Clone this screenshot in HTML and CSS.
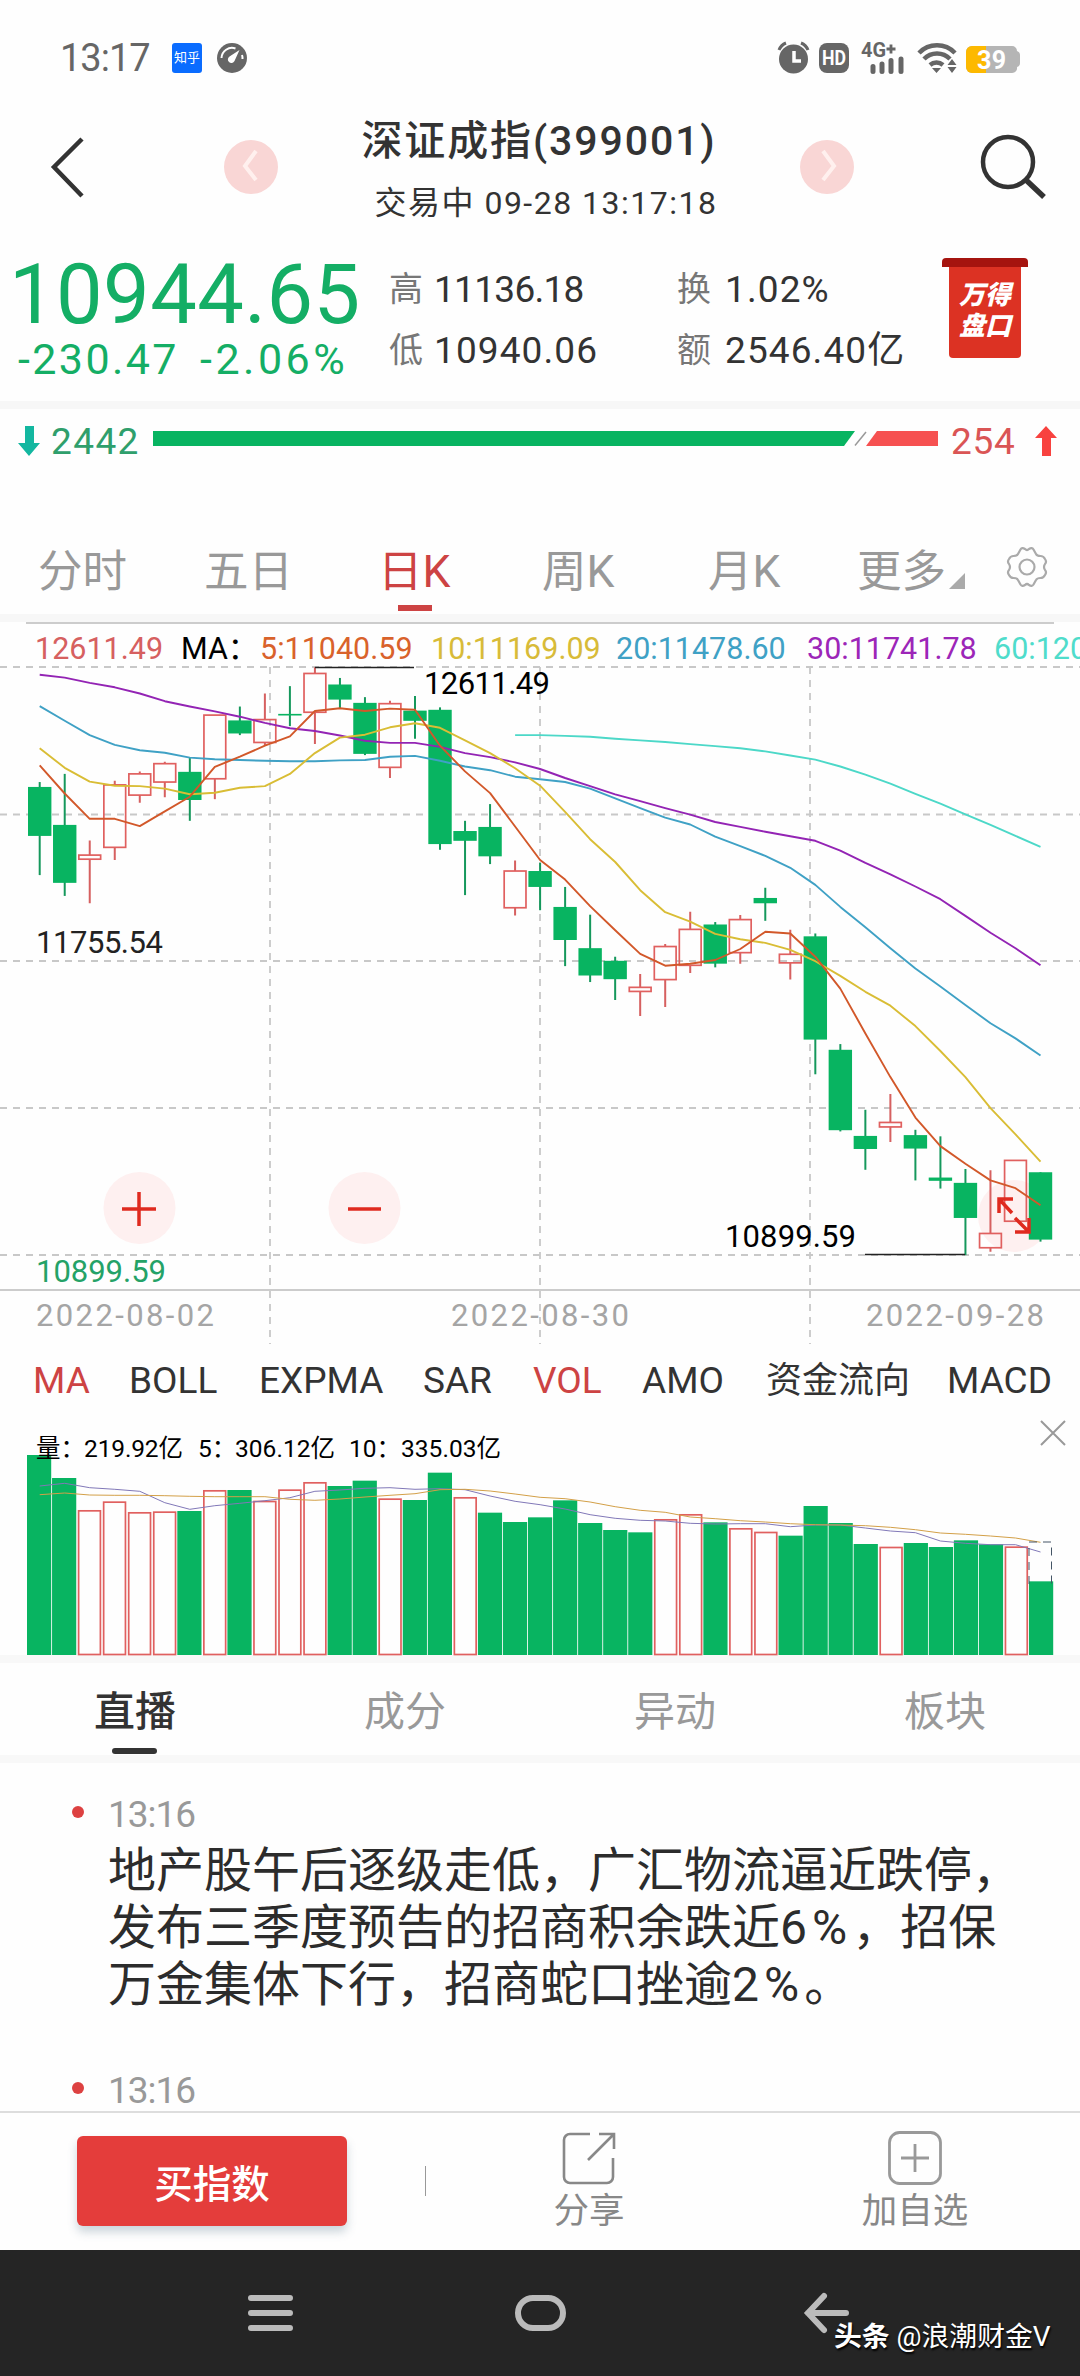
FILE: index.html
```html
<!DOCTYPE html>
<html lang="zh-CN">
<head>
    <meta charset="UTF-8">
    <meta name="viewport" content="width=device-width, initial-scale=1.0">
    <title>深证成指(399001)</title>
    <link rel="stylesheet" href="styles.css">
</head>
<body>
    <!-- Status bar -->
    <div class="status">
        <span class="clock">13:17</span>
        <span class="zhihu">知乎</span>
        <svg class="gauge" width="30" height="30" viewBox="0 0 30 30">
            <circle cx="15" cy="15" r="15" fill="#666"/>
            <path d="M4.500 15a10.500 10.500 0 0 1 14-9.500M25 12a10 10 0 0 1 0.500 4" fill="none" stroke="#fff" stroke-width="2"/>
            <path d="M22.500 7 L17.500 18 a3.500 3.500 0 1 1 -5 -4.500Z" fill="#fff"/>
        </svg>
        <svg class="status-icons" width="250" height="34" viewBox="774 41 250 34">
            <circle cx="793.500" cy="59" r="14.500" fill="#666"/>
            <path d="M779 50 q2-5 7-7M808 50 q-2-5-7-7" fill="none" stroke="#666" stroke-width="3"/>
            <path d="M794 51v10h7" fill="none" stroke="#fff" stroke-width="3.500"/>
            <rect x="819" y="43" width="30" height="30" rx="8" fill="#666"/>
            <text x="822" y="65" class="hd" textLength="24" lengthAdjust="spacingAndGlyphs">HD</text>
            <text x="861" y="57" class="net" textLength="25" lengthAdjust="spacingAndGlyphs">4G</text>
            <path d="M886.500 49h9M891 44.500v9" stroke="#666" stroke-width="2.800"/>
            <path d="M873 66.500v5M882 64v7.500M891 60.500v11M901 59v12.500" stroke="#666" stroke-width="5" stroke-linecap="round"/>
            <g fill="none" stroke="#666" stroke-width="4.500">
                <path d="M919 53a25 25 0 0 1 36 0"/>
                <path d="M924 59a18 18 0 0 1 26 0"/>
                <path d="M930 65a10 10 0 0 1 13 0"/>
            </g>
            <path d="M932 68h9l-4.500 5z M952 59l4.500 6h-9z M952 73l4.500-6h-9z" fill="#666"/>
            <path d="M972 46h40a5 5 0 0 1 5 5q3 1 3 4v8q0 3-3 4a5 5 0 0 1-5 6h-40a6 6 0 0 1-6-6v-15a6 6 0 0 1 6-6z" fill="#b5b5b5"/>
            <path d="M972 46h14v27h-14a6 6 0 0 1-6-6v-15a6 6 0 0 1 6-6z" fill="#fdb900"/>
            <text x="977" y="69" class="charge" textLength="29">39</text>
        </svg>
    </div>

    <!-- Title -->
    <header class="header">
        <svg width="40" height="64" viewBox="0 0 40 64" fill="none" stroke="#333" stroke-width="4.500"><path d="M33 4 L5 32 L33 61"/></svg>
        <svg class="circle-btn" width="54" height="54" viewBox="0 0 54 54"><circle cx="27" cy="27" r="27"/><path d="M32 11 L21 26 L32 40"/></svg>
        <div class="title">
            <h1>深证成指(399001)</h1>
            <p>交易中 09-28 13:17:18</p>
        </div>
        <svg class="circle-btn" width="54" height="54" viewBox="0 0 54 54"><circle cx="27" cy="27" r="27"/><path d="M23 11 L34 26 L23 40"/></svg>
        <svg class="search" width="66" height="66" viewBox="0 0 66 66" fill="none" stroke="#333" stroke-width="4.500"><circle cx="28" cy="28" r="25"/><path d="M46 46 L64 63" stroke-width="5.500"/></svg>
    </header>

    <!-- Quote -->
    <section class="quote">
        <div class="price">
            <div class="last">10944.65</div>
            <div class="change"><span>-230.47</span><span>-2.06%</span></div>
        </div>
        <div class="stats">
            <span class="label">高</span><span>11136.18</span>
            <span class="label">换</span><span class="wide">1.02%</span>
            <span class="label">低</span><span class="wide">10940.06</span>
            <span class="label">额</span><span class="wide">2546.40亿</span>
        </div>
        <div class="badge"><span>万得<br>盘口</span></div>
    </section>

    <!-- Falling / rising counts -->
    <section class="breadth">
        <svg width="22" height="30" viewBox="0 0 22 30"><path d="M7 0h9v17h6L11 30 0 17h7z" fill="#13b7a0"/></svg>
        <span class="down">2442</span>
        <svg width="785" height="15" viewBox="0 0 785 15">
            <path d="M0 0h702l-11 15H0z" fill="#08b461"/>
            <path d="M713 1 L702 14.500" stroke="#999" stroke-width="1.500"/>
            <path d="M724 0h61v15h-72z" fill="#f65151"/>
        </svg>
        <span class="up">254</span>
        <svg width="22" height="30" viewBox="0 0 22 30"><path d="M7 30h9V12h6L11 0 0 12h7z" fill="#f8423f"/></svg>
    </section>

    <!-- Period tabs -->
    <nav class="periods">
        <span>分时</span><span>五日</span><span class="active">日K</span><span>周K</span><span>月K</span><span class="more">更多</span>
        <svg class="gear" width="44" height="44" viewBox="0 0 44 44" fill="none" stroke="#aaa" stroke-width="2.200">
            <path d="M15.500 4.500 Q17 2 20 4 Q22 6 24 4 Q27 2 28.500 4.500 L31 9 Q32 11 35.500 11 Q38.500 11 40 14 Q42 17 40 19 Q38 22 40 25 Q42 27 40 30 Q38.500 33 35.500 33 Q32 33 31 35 L28.500 39.500 Q27 42 24 40 Q22 38 20 40 Q17 42 15.500 39.500 L13 35 Q12 33 8.500 33 Q5.500 33 4 30 Q2 27 4 25 Q6 22 4 19 Q2 17 4 14 Q5.500 11 8.500 11 Q12 11 13 9 Z"/>
            <circle cx="22" cy="22" r="7.500"/>
        </svg>
    </nav>

    <!-- K line chart -->
    <section class="kline">
        <div class="legend">
            <span class="c-high">12611.49</span>
            <span class="c-black">MA：</span>
            <span class="c-ma5">5:11040.59</span>
            <span class="c-ma10">10:11169.09</span>
            <span class="c-ma20">20:11478.60</span>
            <span class="c-ma30">30:11741.78</span>
            <span class="c-ma60">60:12042.67</span>
        </div>
        <svg class="chart" id="kline" width="1080" height="690" viewBox="0 0 1080 690">
            <g class="grid">
                <path d="M0 7H1080M0 154.500H1080M0 301H1080M0 448H1080M0 595H1080"/>
                <path d="M270 7V684M540 7V684M810 7V684"/>
            </g>
            <path class="axis" d="M0 630H1080"/>
            <circle class="zoom-bg" cx="139.500" cy="548" r="36"/>
            <circle class="zoom-bg" cx="364.500" cy="548" r="36"/>
            <circle class="zoom-bg" cx="1014" cy="556" r="36"/>
            <path class="zoom" d="M122 549h34M139 532v34M348 549h33"/>
            <g id="candles"></g>
            <g id="averages"></g>
            <path class="zoom" d="M999 553v-14h14M999 539l13 14M1029 558v14h-14M1015 558l14 14"/>
            <path class="mark" d="M315 7.500H414M865 594.500H965"/>
            <text class="t-black" x="424" y="33.500" textLength="126">12611.49</text>
            <text class="t-dark" x="36" y="293" textLength="127">11755.54</text>
            <text class="t-black" x="725" y="587" textLength="131">10899.59</text>
            <text class="t-green" x="36" y="622" textLength="130">10899.59</text>
            <text class="t-date" x="36" y="666" textLength="178">2022-08-02</text>
            <text class="t-date" x="451" y="666" textLength="178">2022-08-30</text>
            <text class="t-date" x="866" y="666" textLength="178">2022-09-28</text>
        </svg>
    </section>

    <!-- Indicators -->
    <nav class="indicators">
        <span class="active">MA</span><span>BOLL</span><span>EXPMA</span><span>SAR</span><span class="active">VOL</span><span>AMO</span><span class="cjk">资金流向</span><span>MACD</span>
    </nav>

    <!-- Volume chart -->
    <svg class="chart" id="volume" width="1080" height="241" viewBox="0 0 1080 241">
        <g id="bars"></g>
        <g id="volAverages"></g>
        <path d="M1029 164v-42h22.500v42" fill="none" stroke="#456" stroke-width="1" stroke-dasharray="8 6"/>
        <g class="t-vol">
            <text x="36" y="37">量：</text>
            <text x="84" y="37" textLength="99">219.92亿</text>
            <text x="198" y="37">5：</text>
            <text x="235" y="37" textLength="100">306.12亿</text>
            <text x="349" y="37">10：</text>
            <text x="401" y="37" textLength="100">335.03亿</text>
        </g>
        <path d="M1041 1l24 24M1065 1l-24 24" stroke="#999" stroke-width="2"/>
    </svg>

    <!-- News tabs -->
    <nav class="news-tabs">
        <span class="active">直播</span><span>成分</span><span>异动</span><span>板块</span>
    </nav>

    <main class="feed">
        <article>
            <time>13:16</time>
            <p>地产股午后逐级走低，广汇物流逼近跌停，<br>发布三季度预告的招商积余跌近<i>6%</i>，招保<br>万金集体下行，招商蛇口挫逾<i>2%</i>。</p>
        </article>
        <article>
            <time>13:16</time>
        </article>
    </main>

    <!-- Bottom actions -->
    <footer class="actions">
        <button>买指数</button>
        <span class="divider"></span>
        <div class="action">
            <svg width="56" height="56" viewBox="0 0 56 56" fill="none" stroke="#888" stroke-width="2.600">
                <path d="M29 4H9a6 6 0 0 0-6 6v37a6 6 0 0 0 6 6h37a6 6 0 0 0 6-6V28"/>
                <path d="M38 4h15v15M52 5L27 30"/>
            </svg>
            <span>分享</span>
        </div>
        <div class="action">
            <svg width="56" height="56" viewBox="0 0 56 56" fill="none" stroke="#999" stroke-width="2.800">
                <rect x="2.500" y="2.500" width="51" height="51" rx="10"/>
                <path d="M28 14v28M14 28h28"/>
            </svg>
            <span>加自选</span>
        </div>
    </footer>

    <!-- System navigation -->
    <div class="sysnav">
        <svg width="1080" height="126" viewBox="0 0 1080 126" fill="none" stroke="#bbb" stroke-width="6" stroke-linecap="round">
            <path d="M251 48h39M251 63h39M251 78h39"/>
            <rect x="518" y="48" width="45" height="30" rx="15"/>
            <path d="M846 63H808M824 46L808 63l16 17"/>
        </svg>
        <div class="watermark"><b>头条</b><span>@浪潮财金V</span></div>
    </div>

    <script src="chart.js"></script>
</body>
</html>
```
FILE: styles.css
```css
* {
    box-sizing: border-box;
}
body {
    margin: 0;
    width: 1080px;
    height: 2376px;
    overflow: hidden;
    background: #fefefe;
    color: #333;
    font-family: Roboto, "Noto Sans CJK SC", sans-serif;
}
svg {
    display: block;
    flex: none;
}
h1, p {
    margin: 0;
    font-weight: normal;
}

/* Status bar */
.status {
    display: flex;
    align-items: center;
    height: 116px;
    padding-left: 60px;
    color: #666;
}
.clock {
    width: 112px;
    font-size: 38px;
    letter-spacing: -1px;
}
.zhihu {
    width: 30px;
    height: 30px;
    margin-right: 15px;
    border-radius: 3px;
    background: #0a6cff;
    color: #fff;
    font-size: 13px;
    line-height: 29px;
    text-align: center;
}
.status-icons {
    margin-left: 527px;
}
.hd {
    font-size: 20px;
    font-weight: bold;
    fill: #fff;
}
.net {
    font-size: 20px;
    font-weight: bold;
    fill: #666;
}
.charge {
    font-size: 25px;
    font-weight: bold;
    fill: #fff;
}

/* Title */
.header {
    display: flex;
    align-items: center;
    height: 118px;
    padding-left: 49px;
}
.header > svg {
    margin-top: -17px;
}
.circle-btn {
    fill: none;
    stroke: #fff0ee;
    stroke-width: 4;
}
.circle-btn circle {
    fill: #f9d6d5;
    stroke: none;
}
.header .circle-btn:nth-child(2) {
    margin-left: 135px;
}
.title {
    width: 522px;
    padding-bottom: 6px;
    text-align: center;
    white-space: nowrap;
}
.title h1 {
    font-size: 41px;
    font-weight: 500;
    line-height: 62px;
    letter-spacing: 1.900px;
}
.title p {
    font-size: 32px;
    line-height: 62px;
    letter-spacing: 1.500px;
    margin-left: 14px;
}
.header .search {
    margin-left: 126px;
}

/* Quote */
.quote {
    display: flex;
    height: 175px;
    padding-top: 24px;
    border-bottom: 8px solid #f7f7f7;
}
.price {
    width: 389px;
    padding-left: 9px;
    color: #14ae65;
}
.last {
    margin-top: -3px;
    height: 79px;
    font-size: 83px;
    line-height: 80px;
    letter-spacing: 0.4px;
}
.change {
    display: flex;
    padding-left: 9px;
    font-size: 43px;
    line-height: 50px;
    letter-spacing: 2.400px;
}
.change span:first-child {
    width: 182px;
}
.change span:last-child {
    letter-spacing: 3.500px;
}
.stats {
    display: grid;
    grid-template-columns: 45px 243px 48px 217px;
    grid-auto-rows: 61px;
    padding-top: 1px;
    font-size: 37px;
    line-height: 61px;
    letter-spacing: -0.7px;
}
.stats .wide {
    letter-spacing: 1.100px;
}
.label {
    color: #777;
    font-size: 34px;
}
.badge {
    width: 86px;
    height: 100px;
    padding: 9px 7px 0;
    background: linear-gradient(#a5140f, #a5140f) 0 0 / 86px 9px no-repeat;
    border-radius: 4px;
    color: #fff;
    font-size: 26px;
    font-weight: 900;
    font-style: italic;
    line-height: 31px;
    text-align: center;
}
.badge span {
    display: block;
    height: 91px;
    padding-top: 13px;
    border-radius: 0 0 4px 4px;
    background: #dc3223;
}

/* Falling / rising counts */
.breadth {
    display: flex;
    align-items: center;
    height: 64px;
    padding-left: 18px;
    font-size: 37px;
}
.breadth .down {
    width: 113px;
    padding-left: 11px;
    color: #2f9f6c;
    letter-spacing: 1.400px;
}
.breadth svg:nth-child(3) {
    margin-top: -6px;
}
.breadth .up {
    width: 97px;
    padding-left: 13px;
    color: #da5555;
    letter-spacing: 0.7px;
}

/* Period tabs */
.periods {
    display: grid;
    grid-template-columns: 166px 174px 164px 166px 149px 148px 44px;
    align-items: center;
    height: 149px;
    padding: 47px 0 0 38px;
    border-bottom: 8px solid #f7f7f7;
    color: #999;
    font-size: 44.500px;
}
.periods span {
    position: relative;
}
.periods .active {
    color: #cd4343;
}
.periods .active::after {
    content: "";
    position: absolute;
    left: 20px;
    bottom: -11px;
    width: 34px;
    height: 6px;
    background: #cd4343;
}
.more::after {
    content: "";
    position: absolute;
    left: 92px;
    bottom: 11px;
    border-left: 16px solid transparent;
    border-bottom: 16px solid #aaa;
}

/* K line chart */
.kline {
    height: 728px;
}
.legend {
    display: grid;
    grid-template-columns: 146px 79px 171px 185px 191px 187px 85px;
    height: 38px;
    padding: 8px 0 0 35px;
    background: linear-gradient(#ccc, #ccc) 26px 0 / 1028px 2px no-repeat;
    font-size: 30.500px;
    line-height: 38px;
    white-space: nowrap;
}
.c-high { color: #d66060; }
.c-black { color: #000; }
.c-ma5 { color: #d9622b; }
.c-ma10 { color: #d8bb38; }
.c-ma20 { color: #3fa1c5; }
.c-ma30 { color: #9c26b8; }
.c-ma60 { color: #4fdccb; }
.grid {
    fill: none;
    stroke: #c8c8c8;
    stroke-width: 1.800;
    stroke-dasharray: 7 6;
}
.axis {
    stroke: #ccc;
    stroke-width: 2;
}
.fall {
    fill: #08b461;
    stroke: none;
}
.rise {
    fill: #fefefe;
    stroke: #e0605f;
    stroke-width: 1.700;
}
.candle-rise {
    fill: none;
    stroke: #e0605f;
    stroke-width: 1.700;
}
.wick-fall {
    stroke: #15985c;
    stroke-width: 2;
}
.wick-rise {
    stroke: #d66060;
    stroke-width: 2;
}
.line {
    fill: none;
    stroke-width: 1.900;
    stroke-linejoin: round;
}
.ma5 { stroke: #d2582a; }
.ma10 { stroke: #d9bd35; }
.ma20 { stroke: #3fa1c5; }
.ma30 { stroke: #9324b4; }
.ma60 { stroke: #4cd8c8; }
.vol5 { stroke: #8178b8; stroke-width: 1; }
.vol10 { stroke: #d3a048; stroke-width: 1; }
.zoom-bg {
    fill: #fef0f0;
}
.zoom {
    fill: none;
    stroke: #df2a1f;
    stroke-width: 3.500;
}
.mark {
    stroke: #222;
    stroke-width: 1.500;
}
.chart text {
    font-size: 31px;
}
.t-black { fill: #000; }
.t-dark { fill: #222; }
.t-green { fill: #24a267; }
.t-date { fill: #a5a5a5; }
.chart .t-vol text {
    fill: #000;
    font-size: 24.500px;
}

/* Indicators */
.indicators {
    display: grid;
    grid-template-columns: 96px 130px 164px 110px 109px 124px 181px 120px;
    height: 70px;
    padding-left: 33px;
    font-size: 37px;
    line-height: 62px;
}
.indicators .active {
    color: #cd4343;
}
.indicators .cjk {
    font-size: 36px;
}

/* News tabs */
.news-tabs {
    display: grid;
    grid-template-columns: repeat(4, 270px);
    height: 108px;
    margin-top: -6px;
    border-top: 8px solid #f8f8f8;
    border-bottom: 8px solid #f8f8f8;
    color: #999;
    font-size: 41px;
    line-height: 98px;
    text-align: center;
}
.news-tabs .active {
    position: relative;
    color: #333;
    font-weight: 500;
}
.news-tabs .active::after {
    content: "";
    position: absolute;
    left: 112px;
    top: 85px;
    width: 45px;
    height: 6px;
    border-radius: 3px;
    background: #333;
}

/* Feed */
.feed {
    height: 348px;
    padding: 25px 0 0 108px;
    overflow: hidden;
}
.feed article {
    height: 276px;
}
.feed time {
    position: relative;
    display: block;
    color: #999;
    font-size: 37px;
    line-height: 53px;
    letter-spacing: -1px;
}
.feed time::before {
    content: "";
    position: absolute;
    left: -36px;
    top: 18px;
    width: 12px;
    height: 12px;
    border-radius: 50%;
    background: #dd4141;
}
.feed p {
    color: #2c2c2c;
    font-size: 48px;
    line-height: 57px;
    white-space: nowrap;
    margin-top: 1px;
}
.feed i {
    font-style: normal;
    letter-spacing: 5px;
}

/* Bottom actions */
.actions {
    display: flex;
    height: 139px;
    padding-left: 77px;
    border-top: 2px solid #ddd;
}
.actions button {
    width: 270px;
    height: 90px;
    margin-top: 23px;
    padding: 0;
    border: none;
    border-radius: 6px;
    background: #e43d3b;
    box-shadow: 0 6px 10px rgba(90, 120, 140, 0.3);
    color: #fff;
    font: 500 38.500px Roboto, "Noto Sans CJK SC", sans-serif;
}
.divider {
    width: 1px;
    height: 30px;
    margin: 53px 0 0 78px;
    background: #999;
}
.action {
    display: flex;
    flex-direction: column;
    align-items: center;
    width: 326px;
    padding-top: 17px;
    color: #888;
    font-size: 35.500px;
    line-height: 50px;
}

/* System navigation */
.sysnav {
    position: relative;
    height: 126px;
    background: #252525;
}
.watermark {
    position: absolute;
    left: 834px;
    top: 66px;
    display: flex;
    gap: 7px;
    color: #fff;
    font-size: 27.800px;
    line-height: 42px;
    text-shadow: 1px 2px 2px #000;
    white-space: nowrap;
}
```
FILE: chart.js
```js
const COUNT = 41;
const STEP = 25.02;
const SVG = 'http://www.w3.org/2000/svg';

// [top, bottom, high, low], measured down from the top of the plot
const candles = [
    [311, 431, 299, 527], [404, 546, 279, 578], [478, 488, 442, 596], [306, 459, 296, 490],
    [279, 331, 273, 350], [254, 299, 249, 336], [274, 343, 239, 394], [135, 291, 135, 341],
    [148, 180, 114, 184], [146, 202, 82, 209], [132, 136, 64, 162], [33, 128, 18, 206],
    [60, 97, 44, 118], [105, 230, 91, 233], [107, 263, 100, 289], [124, 149, 88, 193],
    [122, 451, 116, 465], [419, 443, 394, 576], [409, 481, 353, 500], [517, 607, 491, 626],
    [517, 556, 497, 613], [605, 686, 556, 750], [706, 773, 624, 789], [737, 782, 727, 833],
    [802, 812, 769, 872], [702, 783, 696, 850], [660, 748, 617, 767], [648, 744, 642, 753],
    [636, 717, 625, 744], [583, 596, 558, 639], [721, 742, 661, 783], [677, 930, 670, 1015],
    [955, 1152, 941, 1155], [1166, 1198, 1102, 1249], [1133, 1144, 1063, 1181], [1164, 1197, 1151, 1275],
    [1268, 1276, 1167, 1295], [1281, 1367, 1247, 1458], [1405, 1440, 1250, 1450], [1226, 1375, 1226, 1375],
    [1255, 1420, 1255, 1425]
];
const candleDir = 'GGRRRRGRGRGRGGRGGGGRGGGGRRRGRGRGGGRGGGRRG';

const averages = {
    ma60: [184, 184, 186, 188, 193, 197, 201, 206, 211, 216, 224, 234, 244, 261, 281, 303, 328, 352, 378, 404, 431, 458],
    ma30: [36, 43, 56, 67, 82, 101, 114, 126, 139, 154, 167, 174, 185, 198, 203, 203, 213, 228, 238, 251, 267, 289, 309, 329, 346, 363, 379, 397, 409, 421, 432, 443, 467, 497, 525, 555, 586, 627, 668, 706, 748],
    ma20: [113, 149, 184, 208, 221, 227, 239, 243, 245, 247, 248, 248, 246, 245, 237, 235, 247, 261, 270, 286, 292, 299, 315, 339, 363, 386, 403, 433, 456, 480, 509, 551, 605, 655, 706, 756, 800, 845, 890, 927, 969],
    ma10: [216, 264, 298, 308, 309, 315, 329, 325, 313, 309, 279, 228, 190, 183, 165, 155, 166, 197, 228, 265, 308, 372, 439, 495, 564, 618, 641, 671, 684, 693, 710, 738, 774, 813, 847, 897, 958, 1022, 1098, 1162, 1229],
    ma5: [258, 327, 389, 389, 407, 371, 335, 262, 237, 210, 187, 125, 118, 125, 119, 122, 210, 273, 326, 408, 490, 538, 603, 662, 720, 749, 744, 735, 708, 666, 670, 727, 805, 915, 1022, 1121, 1191, 1234, 1275, 1294, 1336]
};

const volumes = [105, 174, 271, 245, 277, 275, 273, 211, 210, 243, 209, 187, 198, 182, 236, 240, 158, 232, 278, 306, 292, 241, 309, 330, 337, 298, 283, 307, 325, 336, 347, 258, 309, 372, 381, 369, 381, 361, 373, 380, 484];
const volumeDir = 'GGRRRRGRGRRRGGRGGRGGGGGGGRRGRRGGGGRGGGGRG';

const volAverages = {
    vol5: [198, 190, 203, 208, 214, 248, 268, 257, 250, 242, 233, 214, 210, 205, 203, 208, 206, 209, 228, 244, 254, 267, 284, 295, 301, 303, 310, 312, 311, 311, 320, 315, 315, 324, 333, 338, 363, 370, 374, 374, 396],
    vol10: [224, 219, 225, 226, 226, 227, 229, 230, 230, 230, 238, 241, 237, 231, 226, 221, 209, 208, 213, 222, 232, 236, 246, 260, 271, 277, 291, 296, 302, 306, 311, 314, 315, 317, 322, 329, 339, 343, 348, 354, 367]
};

function add(parent, tag, attrs) {
    const el = document.createElementNS(SVG, tag);
    for (const key in attrs) el.setAttribute(key, attrs[key]);
    document.getElementById(parent).appendChild(el);
}

function drawLines(parent, lines, scale) {
    for (const name in lines) {
        const skip = COUNT - lines[name].length;
        const points = lines[name].map((v, i) => `${(39.7 + (i + skip) * STEP).toFixed(1)},${(v / scale).toFixed(1)}`);
        add(parent, 'polyline', { class: 'line ' + name, points: points.join(' ') });
    }
}

candles.forEach(([top, bottom, high, low], i) => {
    const x = 39.7 + i * STEP;
    const [t, b, h, l] = [top, bottom, high, low].map(v => v / 2.45);
    if (candleDir[i] === 'G') {
        add('candles', 'path', { class: 'wick-fall', d: `M${x} ${h}V${l}` });
        add('candles', 'rect', { class: 'fall', x: x - 11.7, y: t, width: 23.4, height: b - t });
    } else {
        add('candles', 'path', { class: 'wick-rise', d: `M${x} ${h}V${t}M${x} ${b}V${l}` });
        add('candles', 'rect', { class: 'candle-rise', x: x - 10.9, y: t, width: 21.8, height: b - t });
    }
});
drawLines('averages', averages, 2.45);

volumes.forEach((v, i) => {
    const x = 27 + i * 25.05;
    const y = v / 3;
    if (volumeDir[i] === 'G') {
        add('bars', 'rect', { class: 'fall', x: x, y: y, width: 24.2, height: 235 - y });
    } else {
        add('bars', 'rect', { class: 'rise', x: x + 1.5, y: y + 0.5, width: 21.8, height: 234 - y });
    }
});
drawLines('volAverages', volAverages, 3);
```
